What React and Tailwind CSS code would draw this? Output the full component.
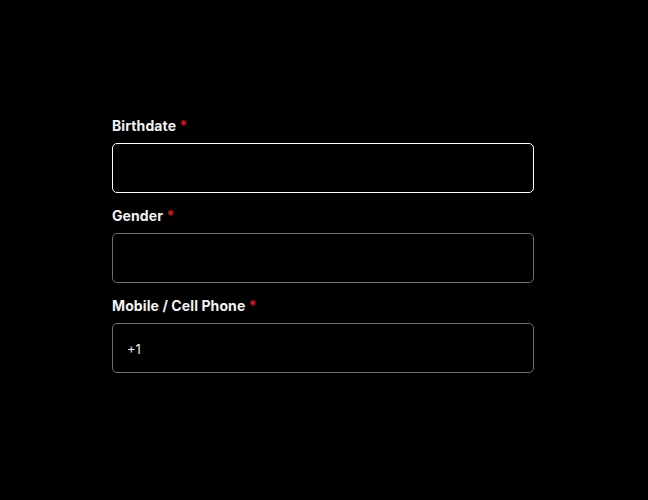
import React from "react";

function Field({ label, focused, value }) {
  return (
    <div className="flex flex-col">
      <label className="text-[14px] leading-[20px] font-bold tracking-[0.1px] text-[#f2f2f2] mb-[7px]">
        {label} <span className="text-[#e0141e]">*</span>
      </label>
      <div
        className={
          focused
            ? "h-[50px] rounded-[5px] border border-white bg-black flex items-center px-[14px]"
            : "h-[50px] rounded-[5px] border border-[#6e6e6e] bg-black flex items-center px-[14px]"
        }
      >
        <span className="text-[13px] mt-[3px] text-[#e8e8e8]">{value}</span>
      </div>
    </div>
  );
}

export default function App() {
  return (
    <div
      className="w-[648px] h-[500px] bg-black pt-[116px] px-[112px]"
      style={{ fontFamily: "Inter, 'Noto Sans', sans-serif" }}
    >
      <div className="flex flex-col gap-[13px] w-[422px]">
        <Field label="Birthdate" focused />
        <Field label="Gender" />
        <Field label="Mobile / Cell Phone" value="+1" />
      </div>
    </div>
  );
}
